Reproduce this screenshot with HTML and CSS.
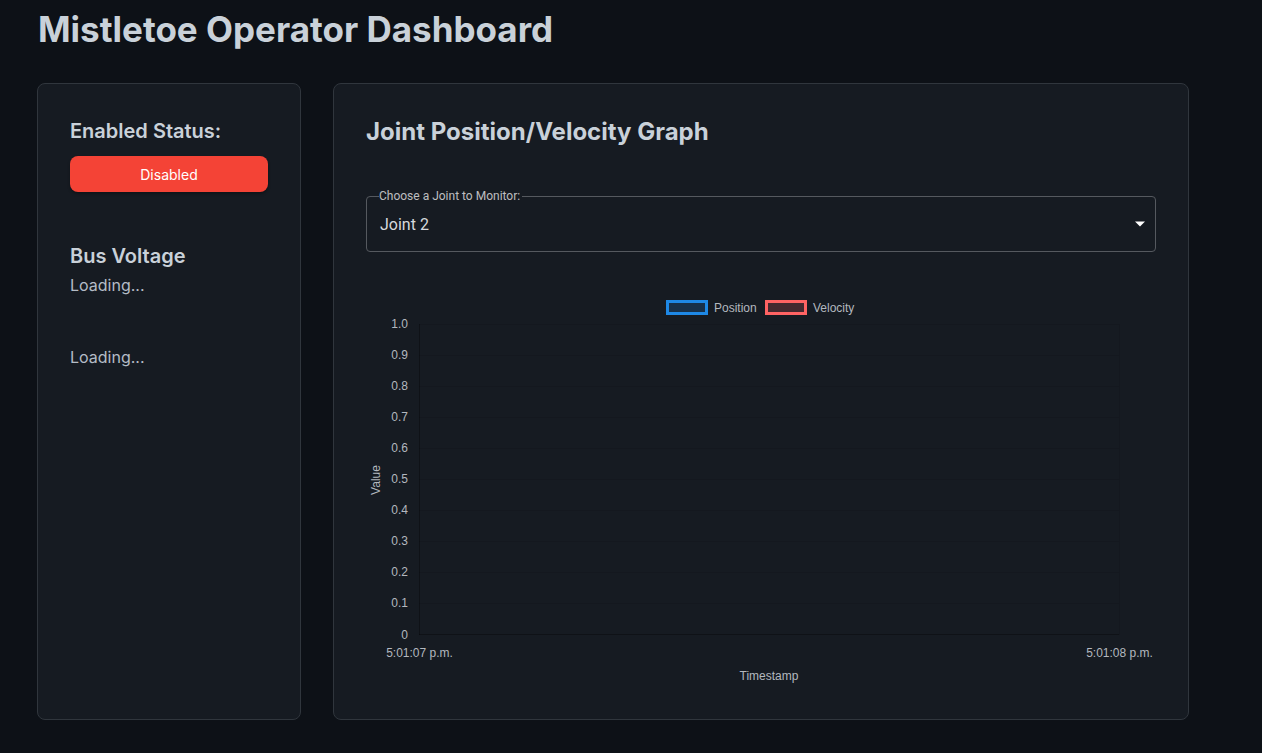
FILE: index.html
```html
<!DOCTYPE html>
<html lang="en">
<head>
<meta charset="utf-8">
<title>Mistletoe Operator Dashboard</title>
<link rel="stylesheet" href="styles.css">
</head>
<body>
<div class="page">
  <h1 class="page-title">Mistletoe Operator Dashboard</h1>
  <div class="cards">
    <section class="card side">
      <h3 class="status-title">Enabled Status:</h3>
      <button class="status-btn">Disabled</button>
      <h3 class="bus-title">Bus Voltage</h3>
      <p class="loading">Loading...</p>
      <p class="loading second">Loading...</p>
    </section>
    <section class="card main">
      <h2 class="graph-title">Joint Position/Velocity Graph</h2>
      <fieldset class="select">
        <legend class="select-label">Choose a Joint to Monitor:</legend>
        <div class="select-row">
          <span class="select-value">Joint 2</span>
          <svg class="select-arrow" width="12" height="8" viewBox="0 0 12 8"><path d="M1 1.5h10L6 6.5z" fill="#fff"/></svg>
        </div>
      </fieldset>
      <svg class="chart" width="790" height="410" viewBox="0 0 790 410">
        <g class="legend">
          <rect x="301.5" y="10.5" width="39" height="12" fill="rgba(30,136,229,0.2)" stroke="#1e88e5" stroke-width="3"/>
          <text x="348" y="20.5">Position</text>
          <rect x="400.5" y="10.5" width="39" height="12" fill="rgba(255,99,99,0.2)" stroke="#ff6363" stroke-width="3"/>
          <text x="447" y="20.5">Velocity</text>
        </g>
        <g class="grid">
          <line x1="53" y1="33.5" x2="753" y2="33.5"/>
          <line x1="53" y1="64.5" x2="753" y2="64.5"/>
          <line x1="53" y1="95.5" x2="753" y2="95.5"/>
          <line x1="53" y1="126.5" x2="753" y2="126.5"/>
          <line x1="53" y1="157.5" x2="753" y2="157.5"/>
          <line x1="53" y1="188.5" x2="753" y2="188.5"/>
          <line x1="53" y1="219.5" x2="753" y2="219.5"/>
          <line x1="53" y1="250.5" x2="753" y2="250.5"/>
          <line x1="53" y1="281.5" x2="753" y2="281.5"/>
          <line x1="53" y1="312.5" x2="753" y2="312.5"/>
          <line x1="753.5" y1="33" x2="753.5" y2="344"/>
        </g>
        <g class="axis">
          <line x1="53.5" y1="33" x2="53.5" y2="344"/>
          <line x1="53" y1="343.5" x2="753" y2="343.5"/>
        </g>
        <g class="ticks" text-anchor="end">
          <text x="42" y="36.6">1.0</text>
          <text x="42" y="67.6">0.9</text>
          <text x="42" y="98.6">0.8</text>
          <text x="42" y="129.6">0.7</text>
          <text x="42" y="160.6">0.6</text>
          <text x="42" y="191.6">0.5</text>
          <text x="42" y="222.6">0.4</text>
          <text x="42" y="253.6">0.3</text>
          <text x="42" y="284.6">0.2</text>
          <text x="42" y="315.6">0.1</text>
          <text x="42" y="347.6">0</text>
        </g>
        <g class="ticks" text-anchor="middle">
          <text x="53.5" y="366">5:01:07 p.m.</text>
          <text x="753.5" y="366">5:01:08 p.m.</text>
          <text x="403" y="389">Timestamp</text>
          <text x="0" y="0" transform="translate(14 189) rotate(-90)">Value</text>
        </g>
      </svg>
    </section>
  </div>
</div>
</body>
</html>
```

FILE: styles.css
```css
* { box-sizing: border-box; }

html, body {
  margin: 0;
  padding: 0;
  background: #0d1117;
  height: 100%;
}

body {
  font-family: Inter, "Noto Sans", sans-serif;
  color: #c9d1d9;
}

.page {
  padding: 0 37px;
}

.page-title {
  margin: 7px 0 32px 1px;
  font-size: 35px;
  line-height: 44px;
  font-weight: 700;
  color: #c9d1d9;
}

.cards {
  display: flex;
  gap: 32px;
  align-items: flex-start;
}

.card {
  background: #161b22;
  border: 1px solid #30363d;
  border-radius: 8px;
  height: 637px;
}

.side {
  width: 264px;
  padding: 36px 32px 32px;
  display: flex;
  flex-direction: column;
}

.status-title {
  margin: 0;
  font-size: 20px;
  line-height: 23px;
  font-weight: 600;
}

.status-btn {
  margin-top: 13px;
  height: 36px;
  width: 198px;
  border: none;
  border-radius: 8px;
  background: #f44336;
  color: #fff;
  font-family: Inter, "Noto Sans", sans-serif;
  font-size: 14px;
  box-shadow: 0 2px 3px rgba(0,0,0,0.3);
}

.bus-title {
  margin: 52px 0 0;
  font-size: 20px;
  line-height: 24px;
  font-weight: 600;
}

.loading {
  margin: 5px 0 0;
  font-size: 16px;
  line-height: 24px;
  color: #b4bcc6;
}

.loading.second {
  margin-top: 48px;
}

.main {
  width: 856px;
  padding: 34px 32px 0;
}

.graph-title {
  margin: 0;
  font-size: 24px;
  line-height: 28px;
  font-weight: 700;
}

.select {
  margin: 44px 0 0;
  height: 62px;
  border: 1px solid #55595f;
  border-radius: 4px;
  padding: 0 13px;
  font-family: Roboto, "Noto Sans", sans-serif;
}

.select-label {
  padding: 0 2px 0 0;
  margin-left: -1px;
  font-size: 12px;
  line-height: 12px;
  color: rgba(255,255,255,0.72);
}

.select-row {
  display: flex;
  align-items: center;
  justify-content: space-between;
  height: 44px;
  margin-top: 0;
}

.select-value {
  font-size: 16px;
  color: #d6d9dd;
}

.select-arrow {
  margin-right: -4px;
}

.chart {
  display: block;
  margin-top: 39px;
  font-family: "Liberation Sans", Arial, sans-serif;
  font-size: 12px;
}

.chart text {
  fill: #b3b8bf;
}

.grid line {
  stroke: rgba(0,0,0,0.08);
  stroke-width: 1;
}

.axis line {
  stroke: rgba(0,0,0,0.3);
  stroke-width: 1;
}
```
